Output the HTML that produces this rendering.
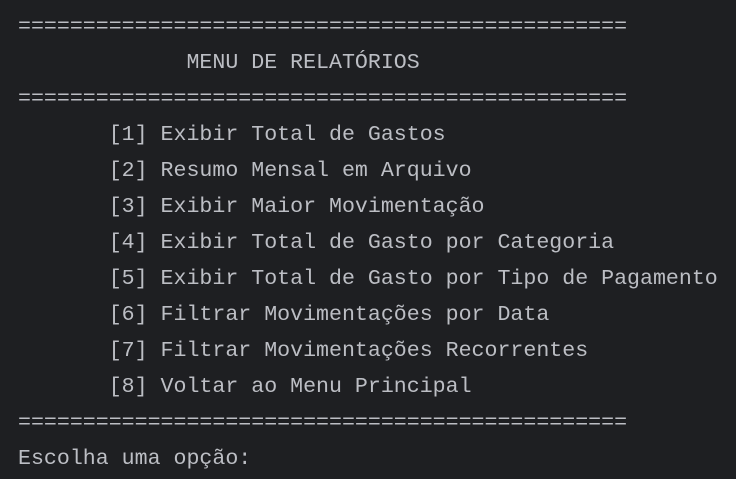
<!DOCTYPE html>
<html><head><meta charset="utf-8"><style>
html,body{margin:0;padding:0;background:#1e1f22;width:736px;height:479px;overflow:hidden}
pre{margin:0;padding:9px 0 0 18px;font-family:"Liberation Mono",monospace;font-size:21.6px;line-height:36px;color:#bcbec4;white-space:pre}
</style></head><body><pre>===============================================
             MENU DE RELATÓRIOS
===============================================
       [1] Exibir Total de Gastos
       [2] Resumo Mensal em Arquivo
       [3] Exibir Maior Movimentação
       [4] Exibir Total de Gasto por Categoria
       [5] Exibir Total de Gasto por Tipo de Pagamento
       [6] Filtrar Movimentações por Data
       [7] Filtrar Movimentações Recorrentes
       [8] Voltar ao Menu Principal
===============================================
Escolha uma opção:</pre></body></html>
